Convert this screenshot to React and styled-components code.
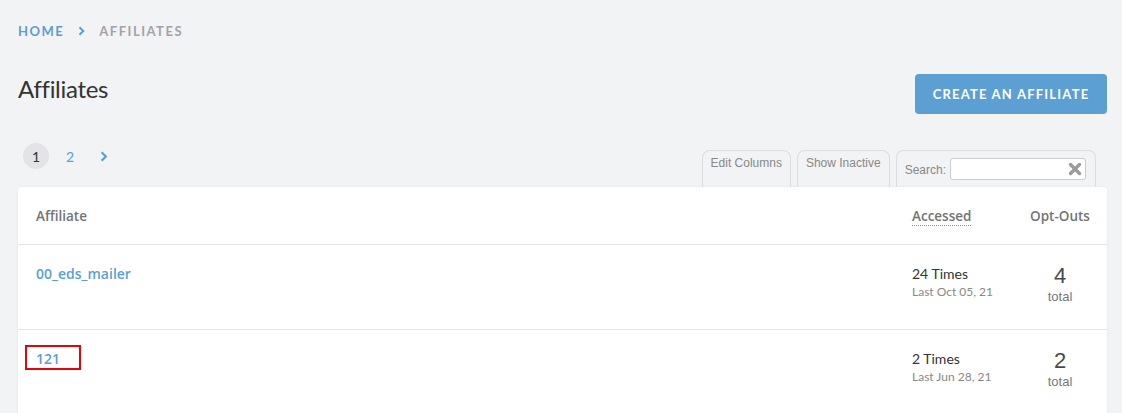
import React from "react";
import styled, { createGlobalStyle } from "styled-components";

const Global = createGlobalStyle`
  html, body { margin: 0; padding: 0; background: #f2f3f5; }
  body { font-family: Lato, "Open Sans", sans-serif; overflow: hidden; }
  * { box-sizing: border-box; }
`;

const Page = styled.div`
  padding: 22px 15px 0 18px;
  width: 1122px;
`;

const Breadcrumb = styled.nav`
  display: flex;
  align-items: center;
  gap: 14px;
  height: 18px;
  font-size: 13px;
  font-weight: 700;
  letter-spacing: 1.5px;
  text-transform: uppercase;
`;

const Crumb = styled.span`
  color: ${(p) => (p.$active ? "#a1a3a6" : "#5a9fd4")};
`;

const Sep = styled.span`
  color: #5a9fd4;
  display: flex;
  align-items: center;
`;

const TitleRow = styled.div`
  display: flex;
  justify-content: space-between;
  align-items: flex-start;
  margin-top: 34px;
`;

const Title = styled.h1`
  margin: 0;
  font-size: 24px;
  line-height: 30px;
  font-weight: 400;
  color: #333;
  letter-spacing: -0.3px;
`;

const PrimaryButton = styled.button`
  width: 192px;
  height: 40px;
  border: none;
  border-radius: 4px;
  background: #5b9fd3;
  color: #fff;
  font-family: inherit;
  font-size: 13px;
  font-weight: 700;
  letter-spacing: 1.2px;
  text-transform: uppercase;
`;

const Toolbar = styled.div`
  display: flex;
  justify-content: space-between;
  align-items: flex-end;
  margin-top: 29px;
`;

const Pager = styled.div`
  display: flex;
  align-items: center;
  gap: 8px;
  padding-left: 5px;
  align-self: flex-start;
`;

const PageNum = styled.span`
  width: 26px;
  height: 26px;
  border-radius: 50%;
  display: flex;
  align-items: center;
  justify-content: center;
  font-size: 14px;
  color: ${(p) => (p.$current ? "#333" : "#5a9fd4")};
  background: ${(p) => (p.$current ? "#e3e4e6" : "transparent")};
`;

const Tabs = styled.div`
  display: flex;
  gap: 6px;
  margin-top: 7px;
  margin-right: 11px;
`;

const Tab = styled.div`
  height: 37px;
  padding: 5px 8px 0;
  border: 1px solid #dcdde0;
  border-bottom: none;
  border-radius: 8px 8px 0 0;
  font-family: "Liberation Sans", Arial, sans-serif;
  font-size: 12px;
  color: #888;
  display: flex;
  align-items: flex-start;
  gap: 4px;
  white-space: nowrap;
`;

const SearchLabel = styled.label`
  margin-top: 7px;
`;

const SearchBox = styled.div`
  position: relative;
  width: 136px;
  height: 22px;
  margin-top: 2px;
  margin-right: 1px;
  background: #fff;
  border: 1px solid #ccc;
  border-radius: 3px;
`;

const ClearIcon = styled.svg`
  position: absolute;
  right: 3px;
  top: 3px;
`;

const Card = styled.div`
  background: #fff;
  border-radius: 4px 4px 0 0;
  box-shadow: 0 0 3px rgba(0, 0, 0, 0.06);
`;

const Row = styled.div`
  display: grid;
  grid-template-columns: 1fr 123px 86px;
  padding: 0 4px 0 18px;
  height: ${(p) => p.$h}px;
  border-bottom: 1px solid #e4e5e7;
  align-items: ${(p) => (p.$head ? "center" : "start")};
`;

const HeadCell = styled.div`
  font-family: "Open Sans", sans-serif;
  font-size: 13.5px;
  font-weight: 600;
  color: #737476;
  padding-left: ${(p) => (p.$pl || 0)}px;
  text-align: ${(p) => p.$align || "left"};
`;

const Dotted = styled.span`
  border-bottom: 1px dotted #888;
`;

const NameCell = styled.div`
  padding-top: 18px;
`;

const NameLink = styled.a`
  display: inline-block;
  font-family: "Open Sans", sans-serif;
  font-size: 14px;
  font-weight: 600;
  color: #5a9fd4;
  text-decoration: none;
  ${(p) =>
    p.$highlight &&
    `
    margin-left: -11px;
    margin-top: -12px;
    padding: 2px 12px 2px 9px;
    width: 56px;
    height: 25px;
    border: 2px solid #e8000a;
  `}
`;

const AccessCell = styled.div`
  padding: 20px 0 0 18px;
`;

const Times = styled.div`
  font-size: 14px;
  color: #333;
`;

const LastDate = styled.div`
  font-size: 12px;
  color: #888;
  margin-top: 2px;
`;

const OptCell = styled.div`
  padding-top: 18px;
  text-align: center;
  font-family: "Liberation Sans", Arial, sans-serif;
`;

const OptNum = styled.div`
  font-size: 22px;
  color: #4a4a4a;
  line-height: 26px;
`;

const OptLabel = styled.div`
  font-size: 13px;
  color: #777;
`;

const Chevron = ({ size = 10 }) => (
  <svg width={size * 0.7} height={size} viewBox="0 0 7 10" fill="none">
    <path d="M1.5 1.2 L5.3 5 L1.5 8.8" stroke="currentColor" strokeWidth="2" />
  </svg>
);

const rows = [
  { name: "00_eds_mailer", times: "24 Times", last: "Last Oct 05, 21", opt: 4 },
  { name: "121", times: "2 Times", last: "Last Jun 28, 21", opt: 2, highlight: true },
];

export default function App() {
  return (
    <>
      <Global />
      <Page>
        <Breadcrumb>
          <Crumb>Home</Crumb>
          <Sep><Chevron /></Sep>
          <Crumb $active>Affiliates</Crumb>
        </Breadcrumb>
        <TitleRow>
          <Title>Affiliates</Title>
          <PrimaryButton>Create an Affiliate</PrimaryButton>
        </TitleRow>
        <Toolbar>
          <Pager>
            <PageNum $current>1</PageNum>
            <PageNum>2</PageNum>
            <PageNum><Chevron size={11} /></PageNum>
          </Pager>
          <Tabs>
            <Tab>Edit Columns</Tab>
            <Tab>Show Inactive</Tab>
            <Tab>
              <SearchLabel>Search:</SearchLabel>
              <SearchBox>
                <ClearIcon width="14" height="14" viewBox="0 0 14 14">
                  <path d="M2.5 2.5 L11.5 11.5 M11.5 2.5 L2.5 11.5" stroke="#9a9a9a" strokeWidth="3.4" strokeLinecap="round" />
                </ClearIcon>
              </SearchBox>
            </Tab>
          </Tabs>
        </Toolbar>
        <Card>
          <Row $head $h={58}>
            <HeadCell>Affiliate</HeadCell>
            <HeadCell $pl={18}><Dotted>Accessed</Dotted></HeadCell>
            <HeadCell $align="center">Opt-Outs</HeadCell>
          </Row>
          {rows.map((r) => (
            <Row key={r.name} $h={85}>
              <NameCell>
                <NameLink href="#" $highlight={r.highlight}>{r.name}</NameLink>
              </NameCell>
              <AccessCell>
                <Times>{r.times}</Times>
                <LastDate>{r.last}</LastDate>
              </AccessCell>
              <OptCell>
                <OptNum>{r.opt}</OptNum>
                <OptLabel>total</OptLabel>
              </OptCell>
            </Row>
          ))}
        </Card>
      </Page>
    </>
  );
}
